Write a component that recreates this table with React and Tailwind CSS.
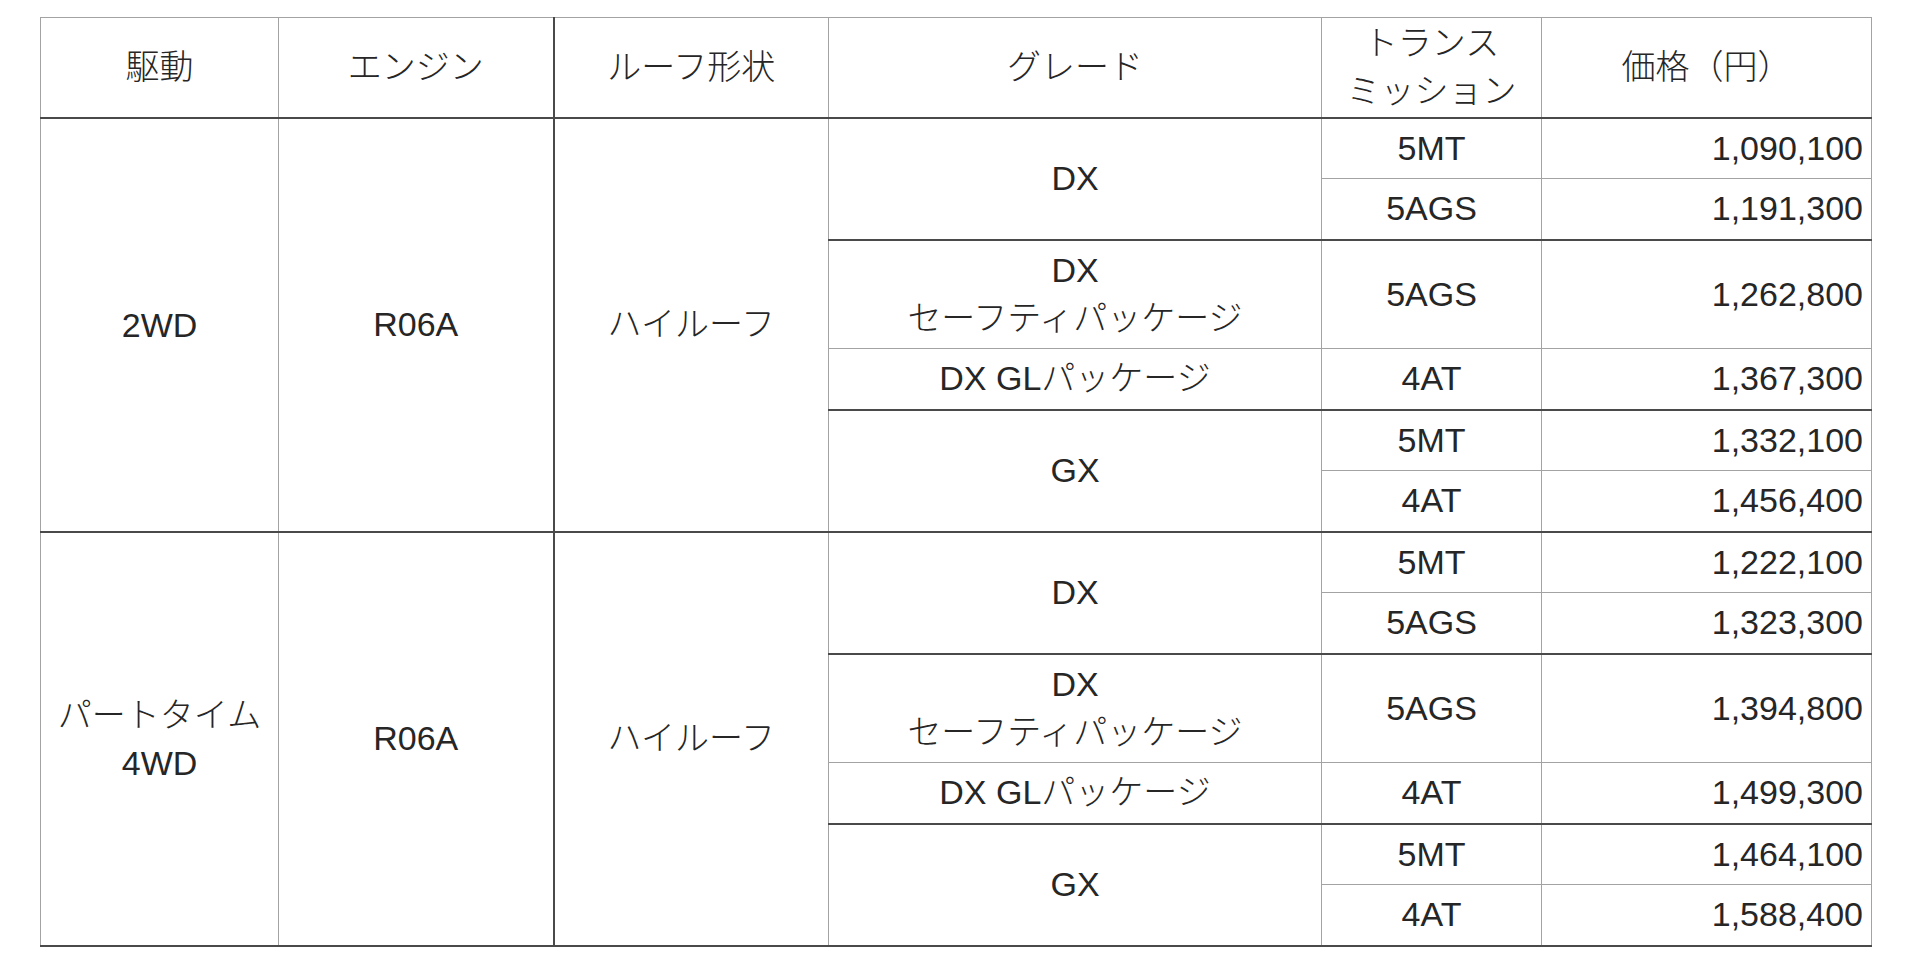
import React from "react";

const FONT = { fontFamily: '"Liberation Sans", "Noto Sans CJK JP", sans-serif' };

const blocks = [
  {
    drive: ["2WD"],
    prices: ["1,090,100", "1,191,300", "1,262,800", "1,367,300", "1,332,100", "1,456,400"],
  },
  {
    drive: ["パートタイム", "4WD"],
    prices: ["1,222,100", "1,323,300", "1,394,800", "1,499,300", "1,464,100", "1,588,400"],
  },
];

const base = "border border-[#a3a3a3] text-center align-middle p-0";
const price = "border border-[#a3a3a3] text-right align-middle pr-[8px] pl-0 py-0";

function Block({ b, first, last }) {
  const top = first ? "" : " border-t-2 border-t-[#4a4a4a]";
  const bot = last ? " border-b-2 border-b-[#4a4a4a]" : "";
  const thickT = " border-t-2 border-t-[#4a4a4a]";
  return (
    <>
      <tr className="h-[61px]">
        <td rowSpan={6} className={base + top + bot}>
          {b.drive.map((d, i) => (
            <div key={i} className="leading-[48px]">{d}</div>
          ))}
        </td>
        <td rowSpan={6} className={base + top + bot}>R06A</td>
        <td rowSpan={6} className={base + top + bot + " border-l-2 border-l-[#4a4a4a]"}>ハイルーフ</td>
        <td rowSpan={2} className={base + thickT}>DX</td>
        <td className={base + thickT}>5MT</td>
        <td className={price + thickT}>{b.prices[0]}</td>
      </tr>
      <tr className="h-[61px]">
        <td className={base}>5AGS</td>
        <td className={price}>{b.prices[1]}</td>
      </tr>
      <tr className="h-[109px]">
        <td className={base + thickT}>
          <div className="leading-[48px]">DX</div>
          <div className="leading-[48px]">セーフティパッケージ</div>
        </td>
        <td className={base + thickT}>5AGS</td>
        <td className={price + thickT}>{b.prices[2]}</td>
      </tr>
      <tr className="h-[61px]">
        <td className={base}>DX GLパッケージ</td>
        <td className={base}>4AT</td>
        <td className={price}>{b.prices[3]}</td>
      </tr>
      <tr className="h-[61px]">
        <td rowSpan={2} className={base + thickT + bot}>GX</td>
        <td className={base + thickT}>5MT</td>
        <td className={price + thickT}>{b.prices[4]}</td>
      </tr>
      <tr className="h-[61px]">
        <td className={base + bot}>4AT</td>
        <td className={price + bot}>{b.prices[5]}</td>
      </tr>
    </>
  );
}

export default function App() {
  const h = "border border-[#a3a3a3] border-b-2 border-b-[#4a4a4a] text-center align-middle p-0 font-light";
  return (
    <div className="min-h-screen w-full bg-white pt-[17px] pl-[40px]" style={FONT}>
      <table className="table-fixed border-collapse w-[1831px] text-[34px] font-light text-[#262626]">
        <colgroup>
          <col className="w-[238px]" />
          <col className="w-[275px]" />
          <col className="w-[275px]" />
          <col className="w-[493px]" />
          <col className="w-[220px]" />
          <col className="w-[330px]" />
        </colgroup>
        <thead>
          <tr className="h-[100px]">
            <th className={h}>駆動</th>
            <th className={h}>エンジン</th>
            <th className={h + " border-l-2 border-l-[#4a4a4a]"}>ルーフ形状</th>
            <th className={h}>グレード</th>
            <th className={h}>
              <div className="leading-[48px]">トランス</div>
              <div className="leading-[48px]">ミッション</div>
            </th>
            <th className={h}>価格（円）</th>
          </tr>
        </thead>
        <tbody>
          {blocks.map((b, i) => (
            <Block key={i} b={b} first={i === 0} last={i === blocks.length - 1} />
          ))}
        </tbody>
      </table>
    </div>
  );
}
